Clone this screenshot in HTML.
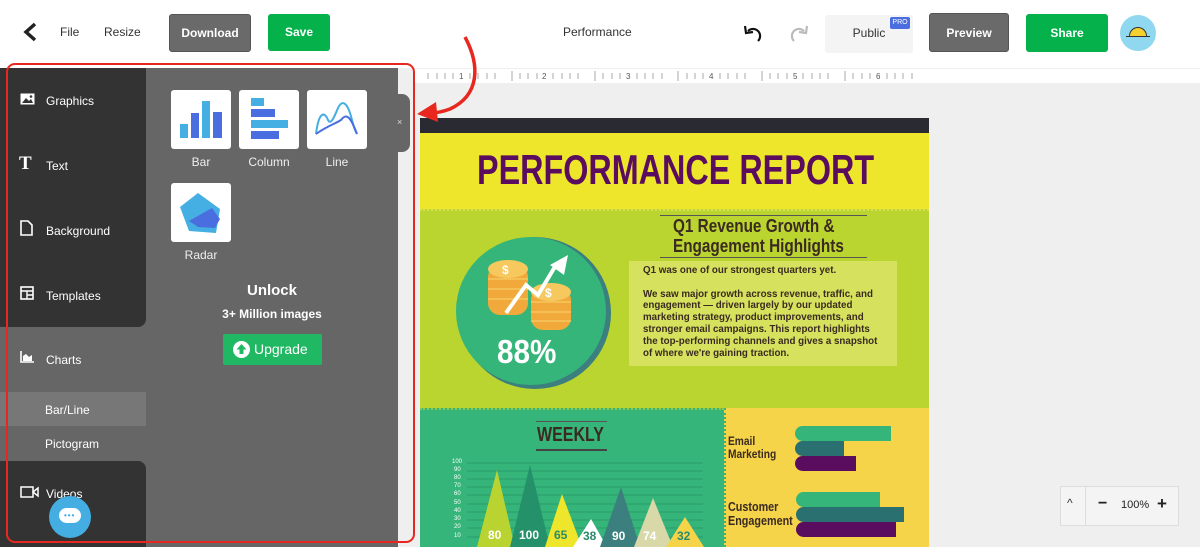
<!DOCTYPE html>
<html><head><style>
*{margin:0;padding:0;box-sizing:border-box}
body{width:1200px;height:547px;overflow:hidden;background:#efefef;font-family:"Liberation Sans",sans-serif;position:relative}
.a{position:absolute}
.hdr{left:0;top:0;width:1200px;height:68px;background:#fff}
.btn{position:absolute;border-radius:3px;color:#fff;font-weight:bold;font-size:12px;text-align:center}
.side{color:#fff;font-size:12px}
.cond{font-family:"Liberation Sans",sans-serif;font-weight:bold;white-space:nowrap;transform-origin:0 0}
</style></head><body>
<div class="a hdr"></div>
<svg class="a" style="left:22px;top:22px" width="16" height="20"><path d="M13 2 L4 10 L13 18" fill="none" stroke="#222" stroke-width="3.5"/></svg>
<div class="a" style="left:60px;top:25px;font-size:12px;color:#333">File</div>
<div class="a" style="left:104px;top:25px;font-size:12px;color:#333">Resize</div>
<div class="btn" style="left:169px;top:14px;width:82px;height:38px;line-height:36px;background:#6a6a6a;border:1px solid #555">Download</div>
<div class="btn" style="left:268px;top:14px;width:62px;height:37px;line-height:37px;background:#04b14a">Save</div>
<div class="a" style="left:563px;top:25px;font-size:12px;color:#333">Performance</div>
<svg class="a" style="left:743px;top:22px" width="70" height="22"><path d="M5 9 A7 7 0 1 1 15 19" fill="none" stroke="#111" stroke-width="2.2"/><path d="M2 4 L3 11 L10 10" fill="none" stroke="#111" stroke-width="2.2"/><path d="M61 9 A7 7 0 1 0 51 19" fill="none" stroke="#bbb" stroke-width="2.2"/><path d="M64 4 L63 11 L56 10" fill="none" stroke="#bbb" stroke-width="2.2"/></svg>
<div class="a" style="left:825px;top:15px;width:88px;height:38px;background:#f4f4f4;border-radius:3px;font-size:12px;color:#333;line-height:36px;text-align:center">Public</div>
<div class="a" style="left:890px;top:17px;width:20px;height:12px;background:#4a6ee0;border-radius:2px;color:#fff;font-size:7px;text-align:center;line-height:12px">PRO</div>
<div class="btn" style="left:929px;top:13px;width:80px;height:39px;line-height:38px;background:#6a6a6a;border:1px solid #555">Preview</div>
<div class="btn" style="left:1026px;top:14px;width:82px;height:38px;line-height:38px;background:#04b14a">Share</div>
<div class="a" style="left:1120px;top:15px;width:36px;height:36px;border-radius:50%;background:#8fd8f0;overflow:hidden"><div class="a" style="left:9px;top:12px;width:18px;height:18px;border-radius:50%;background:#f5d130;border:1px solid #333"></div><div class="a" style="left:0;top:22px;width:36px;height:14px;background:#8fd8f0"></div><div class="a" style="left:6px;top:21px;width:24px;height:1px;background:#333"></div></div>
<!-- ruler -->
<div class="a" style="left:414px;top:68px;width:786px;height:15px;background:#fff;border-top:1px solid #eee"></div>
<svg class="a" style="left:420px;top:70px" width="500" height="12"><g stroke="#aaa" stroke-width="1">
<path d="M8 3v6M17 3v6M25 3v6M33 3v6M50 3v6M58 3v6M67 3v6M75 3v6M92 1v10M100 3v6M108 3v6M117 3v6M133 3v6M142 3v6M150 3v6M158 3v6M175 1v10M183 3v6M192 3v6M200 3v6M217 3v6M225 3v6M233 3v6M242 3v6M258 1v10M267 3v6M275 3v6M283 3v6M300 3v6M308 3v6M317 3v6M325 3v6M342 1v10M350 3v6M358 3v6M367 3v6M383 3v6M392 3v6M400 3v6M408 3v6M425 1v10M433 3v6M442 3v6M450 3v6M467 3v6M475 3v6M483 3v6M492 3v6"/></g>
<g font-size="8" fill="#555" font-family="Liberation Sans"><text x="39" y="9">1</text><text x="122" y="9">2</text><text x="206" y="9">3</text><text x="289" y="9">4</text><text x="373" y="9">5</text><text x="456" y="9">6</text></g></svg>
<!-- sidebar -->
<div class="a" style="left:0;top:68px;width:398px;height:479px;background:#666"></div>
<div class="a" style="left:0;top:68px;width:146px;height:259px;background:#333;border-radius:0 0 8px 0"></div>
<div class="a" style="left:0;top:392px;width:146px;height:34px;background:#777"></div>
<div class="a" style="left:0;top:461px;width:146px;height:86px;background:#333;border-radius:0 8px 0 0"></div>
<div class="a side" style="left:46px;top:94px">Graphics</div>
<svg class="a" style="left:20px;top:93px" width="15" height="12"><rect x="0.5" y="0.5" width="14" height="11" fill="#fff"/><path d="M2 10L6 5L9 8L11 6L13 10Z" fill="#333"/><circle cx="11" cy="3.5" r="1.3" fill="#333"/></svg>
<div class="a side" style="left:19px;top:153px;font:bold 19px 'Liberation Serif',serif">T</div>
<div class="a side" style="left:46px;top:159px">Text</div>
<svg class="a" style="left:20px;top:220px" width="13" height="16"><path d="M1 1H8L12 5V15H1Z" fill="none" stroke="#fff" stroke-width="1.6"/></svg>
<div class="a side" style="left:46px;top:224px">Background</div>
<svg class="a" style="left:20px;top:286px" width="14" height="14"><rect x="1" y="1" width="12" height="12" fill="none" stroke="#fff" stroke-width="1.6"/><path d="M1 5H13M7 5V13M7 9H13" stroke="#fff" stroke-width="1.4"/></svg>
<div class="a side" style="left:46px;top:289px">Templates</div>
<svg class="a" style="left:20px;top:351px" width="14" height="12"><path d="M1 0V11H14" fill="none" stroke="#fff" stroke-width="1.6"/><path d="M3 10V5L6 3L9 6L12 4V10Z" fill="#fff"/></svg>
<div class="a side" style="left:46px;top:353px">Charts</div>
<div class="a side" style="left:45px;top:403px">Bar/Line</div>
<div class="a side" style="left:45px;top:437px">Pictogram</div>
<svg class="a" style="left:20px;top:486px" width="19" height="12"><rect x="1" y="1" width="12" height="10" fill="none" stroke="#fff" stroke-width="1.5"/><path d="M13 6L18 2V10Z" fill="none" stroke="#fff" stroke-width="1.5"/></svg>
<div class="a side" style="left:46px;top:487px">Videos</div>
<div class="a" style="left:49px;top:496px;width:42px;height:42px;border-radius:50%;background:#44aee2"></div>
<div class="a" style="left:59px;top:508px;width:22px;height:15px;border-radius:8px;background:#fff"></div>
<div class="a" style="left:64px;top:514px;font-size:8px;color:#44aee2;line-height:3px;letter-spacing:1px;font-weight:bold">•••</div>
<!-- chart tiles -->
<div class="a" style="left:171px;top:90px;width:60px;height:59px;background:#fff;border-radius:3px"></div>
<svg class="a" style="left:171px;top:90px" width="60" height="59"><rect x="9" y="34" width="8" height="14" fill="#45aee2"/><rect x="20" y="23" width="8" height="25" fill="#4a6ee0"/><rect x="31" y="11" width="8" height="37" fill="#45aee2"/><rect x="42" y="22" width="9" height="26" fill="#4a6ee0"/></svg>
<div class="a" style="left:239px;top:90px;width:60px;height:59px;background:#fff;border-radius:3px"></div>
<svg class="a" style="left:239px;top:90px" width="60" height="59"><rect x="12" y="8" width="13" height="8" fill="#45aee2"/><rect x="12" y="19" width="24" height="8" fill="#4a6ee0"/><rect x="12" y="30" width="37" height="8" fill="#45aee2"/><rect x="12" y="41" width="28" height="8" fill="#4a6ee0"/></svg>
<div class="a" style="left:307px;top:90px;width:60px;height:59px;background:#fff;border-radius:3px"></div>
<svg class="a" style="left:307px;top:90px" width="60" height="59"><path d="M9 44C12 20 18 22 21 30C24 36 28 25 31 18C36 8 41 14 45 30C47 38 48 40 50 44" fill="none" stroke="#45aee2" stroke-width="2"/><path d="M9 44C20 36 28 34 34 30C40 22 44 28 50 44" fill="none" stroke="#4a6ee0" stroke-width="2"/></svg>
<div class="a" style="left:171px;top:183px;width:60px;height:59px;background:#fff;border-radius:3px"></div>
<svg class="a" style="left:171px;top:183px" width="60" height="59"><path d="M9 24L27 10L49 26L45 50L18 48Z" fill="#45aee2"/><path d="M18 38L41 25L49 36L44 45L27 44Z" fill="#4a6ee0"/></svg>
<div class="a side" style="left:171px;top:155px;width:60px;text-align:center;color:#eee">Bar</div>
<div class="a side" style="left:235px;top:155px;width:68px;text-align:center;color:#eee">Column</div>
<div class="a side" style="left:307px;top:155px;width:60px;text-align:center;color:#eee">Line</div>
<div class="a side" style="left:171px;top:248px;width:60px;text-align:center;color:#eee">Radar</div>
<div class="a" style="left:146px;top:282px;width:252px;text-align:center;color:#fff;font-weight:bold;font-size:15px">Unlock</div>
<div class="a" style="left:146px;top:307px;width:252px;text-align:center;color:#fff;font-weight:bold;font-size:12px">3+ Million images</div>
<div class="a" style="left:223px;top:334px;width:99px;height:31px;background:#21b863;border-radius:2px;color:#fff;font-size:14px;line-height:30px;padding-left:31px">Upgrade</div>
<div class="a" style="left:233px;top:341px;width:17px;height:17px;border-radius:50%;background:#fff"></div>
<svg class="a" style="left:233px;top:341px" width="17" height="17"><path d="M8.5 3L3.5 8.5H6.5V13H10.5V8.5H13.5Z" fill="#21b863"/></svg>
<!-- tab handle -->
<div class="a" style="left:398px;top:94px;width:12px;height:58px;background:#666;border-radius:0 8px 8px 0"></div>
<div class="a" style="left:397px;top:117px;font-size:9px;color:#ddd">×</div>
<!-- infographic -->
<div class="a" style="left:420px;top:118px;width:509px;height:15px;background:#2a2a33"></div>
<div class="a" style="left:420px;top:133px;width:509px;height:76px;background:#eee62a"></div>
<div class="a cond" style="left:477px;top:146px;font-size:42px;color:#5a0c5e;transform:scaleX(0.77)">PERFORMANCE REPORT</div>
<div class="a" style="left:420px;top:209px;width:509px;height:199px;background:#bad430;border-top:2px dotted #d8e050"></div>
<div class="a" style="left:459px;top:237px;width:152px;height:152px;border-radius:50%;background:#3b7f7f"></div>
<div class="a" style="left:456px;top:237px;width:150px;height:148px;border-radius:50%;background:#35b57a"></div>
<svg class="a" style="left:486px;top:255px" width="100" height="80"><g fill="#f0a93a"><rect x="2" y="10" width="40" height="50" rx="12"/><rect x="45" y="33" width="40" height="42" rx="12"/></g><g stroke="#f6c85e" stroke-width="1.5"><path d="M2 24H42M2 34H42M2 44H42M45 47H85M45 57H85M45 66H85"/></g><ellipse cx="22" cy="14" rx="20" ry="9" fill="#f6c85e"/><ellipse cx="65" cy="37" rx="20" ry="9" fill="#f6c85e"/><text x="16" y="19" font-size="12" fill="#fff" font-weight="bold">$</text><text x="59" y="42" font-size="12" fill="#fff" font-weight="bold">$</text><path d="M20 58L40 30L52 40L70 10" fill="none" stroke="#fff" stroke-width="4"/><path d="M64 10L82 0L78 20Z" fill="#fff"/></svg>
<div class="a cond" style="left:497px;top:333px;font-size:33px;color:#fff;transform:scaleX(0.9)">88%</div>
<div class="a" style="left:660px;top:215px;width:207px;height:1px;background:#555"></div>
<div class="a" style="left:660px;top:257px;width:207px;height:1px;background:#555"></div>
<div class="a cond" style="left:673px;top:216px;font-size:18px;color:#3a2a20;line-height:20px;transform:scaleX(0.85)">Q1 Revenue Growth &amp;</div>
<div class="a cond" style="left:673px;top:236px;font-size:18px;color:#3a2a20;line-height:20px;transform:scaleX(0.85)">Engagement Highlights</div>
<div class="a" style="left:629px;top:261px;width:268px;height:105px;background:#d6e25e"></div>
<div class="a cond" style="left:643px;top:265px;font-size:10.5px;color:#3a2a20;line-height:11.8px;transform:scaleX(0.93)">Q1 was one of our strongest quarters yet.<br><br>We saw major growth across revenue, traffic, and<br>engagement — driven largely by our updated<br>marketing strategy, product improvements, and<br>stronger email campaigns. This report highlights<br>the top-performing channels and gives a snapshot<br>of where we're gaining traction.</div>
<div class="a" style="left:420px;top:408px;width:304px;height:139px;background:#35b57a;border-top:2px dotted #8cc850"></div>
<div class="a" style="left:724px;top:408px;width:205px;height:139px;background:#f5d44a;border-left:2px dotted #35b57a"></div>
<div class="a" style="left:536px;top:421px;width:71px;height:1px;background:#555"></div>
<div class="a" style="left:536px;top:449px;width:71px;height:2px;background:#444"></div>
<div class="a cond" style="left:537px;top:424px;font-size:20px;color:#3a2a20;transform:scaleX(0.8)">WEEKLY</div>
<svg class="a" style="left:440px;top:455px" width="290" height="92"><g stroke="#2a9a6a" stroke-width="1"><path d="M27 8H263M27 16H263M27 24H263M27 32H263M27 40H263M27 49H263M27 57H263M27 65H263M27 73H263M27 82H263"/></g><g font-size="6" fill="#fff" font-family="Liberation Sans"><text x="12" y="8">100</text><text x="14" y="16">90</text><text x="14" y="24">80</text><text x="14" y="32">70</text><text x="14" y="40">60</text><text x="14" y="49">50</text><text x="14" y="57">40</text><text x="14" y="65">30</text><text x="14" y="73">20</text><text x="14" y="82">10</text></g>
<path d="M37 92L57 15L75 92Z" fill="#b9d431"/><path d="M70 92L90 10L110 92Z" fill="#24916a"/><path d="M105 92L122 39L142 92Z" fill="#eee62a"/><path d="M133 92L151 64L167 92Z" fill="#fff"/><path d="M160 92L181 32L200 92Z" fill="#3b7f7f"/><path d="M194 92L213 43L233 92Z" fill="#d8d8a8"/><path d="M226 92L245 62L264 92Z" fill="#f5d44a"/>
<g font-size="12" font-weight="bold" font-family="Liberation Sans,sans-serif"><text x="48" y="84" fill="#fff">80</text><text x="79" y="84" fill="#fff">100</text><text x="114" y="84" fill="#2a8a6a">65</text><text x="143" y="85" fill="#2a8a6a">38</text><text x="172" y="85" fill="#fff">90</text><text x="203" y="85" fill="#fff">74</text><text x="237" y="85" fill="#2a8a6a">32</text></g></svg>
<div class="a cond" style="left:728px;top:435px;font-size:12px;color:#3a2a20;line-height:13px;transform:scaleX(0.85)">Email<br>Marketing</div>
<div class="a cond" style="left:728px;top:500px;font-size:13px;color:#3a2a20;line-height:14px;transform:scaleX(0.83)">Customer<br>Engagement</div>
<div class="a" style="left:795px;top:426px;width:96px;height:15px;background:#35b57a;border-radius:8px 0 0 8px"></div>
<div class="a" style="left:795px;top:441px;width:49px;height:15px;background:#2a7070;border-radius:8px 0 0 8px"></div>
<div class="a" style="left:795px;top:456px;width:61px;height:15px;background:#5a0c5e;border-radius:8px 0 0 8px"></div>
<div class="a" style="left:796px;top:492px;width:84px;height:15px;background:#35b57a;border-radius:8px 0 0 8px"></div>
<div class="a" style="left:796px;top:507px;width:108px;height:15px;background:#2a7070;border-radius:8px 0 0 8px"></div>
<div class="a" style="left:796px;top:522px;width:100px;height:15px;background:#5a0c5e;border-radius:8px 0 0 8px"></div>
<!-- zoom control -->
<div class="a" style="left:1060px;top:486px;width:119px;height:40px;background:#f4f4f4;border:1px solid #ddd"></div>
<div class="a" style="left:1085px;top:486px;width:1px;height:40px;background:#ddd"></div>
<div class="a" style="left:1067px;top:496px;font-size:12px;color:#333">^</div>
<div class="a" style="left:1098px;top:495px;font-size:16px;font-weight:bold;color:#222">−</div>
<div class="a" style="left:1121px;top:499px;font-size:11px;color:#222">100%</div>
<div class="a" style="left:1157px;top:494px;font-size:17px;font-weight:bold;color:#222">+</div>
<!-- red annotation -->
<div class="a" style="left:6px;top:63px;width:409px;height:480px;border:2px solid #e8281e;border-radius:9px"></div>
<svg class="a" style="left:400px;top:20px" width="100" height="110"><path d="M65 17C80 45 80 75 50 89C42 92 35 93 30 93" fill="none" stroke="#e8281e" stroke-width="3.5"/><path d="M17 94L36 82L38 102Z" fill="#e8281e"/></svg>
</body></html>
